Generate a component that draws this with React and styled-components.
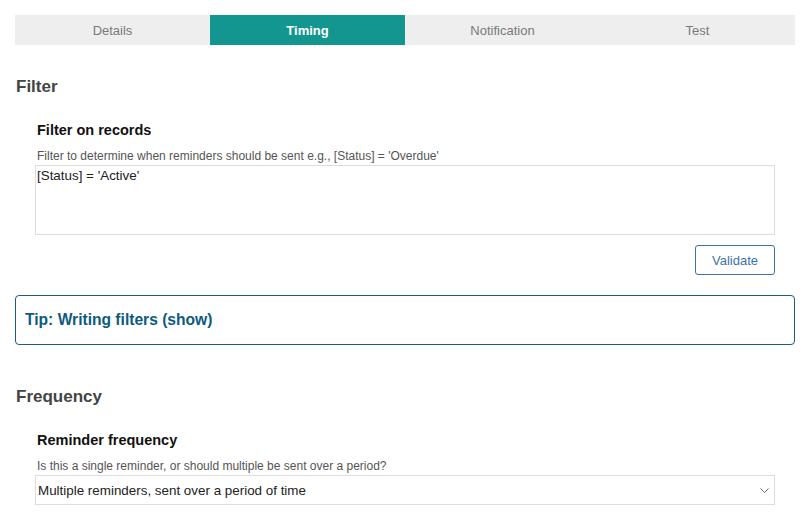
import React, { useState } from 'react';
import styled, { createGlobalStyle } from 'styled-components';

const GlobalStyle = createGlobalStyle`
  body {
    margin: 0;
    background: #fff;
    font-family: 'Liberation Sans', Arial, sans-serif;
  }
`;

const Page = styled.div`
  padding: 15px 14px 0 15px;
`;

const TabBar = styled.div`
  display: grid;
  grid-template-columns: repeat(4, 1fr);
  background: #eeeeee;
  height: 30px;
`;

const Tab = styled.button`
  border: none;
  margin: 0;
  padding: 0;
  font-family: inherit;
  font-size: 13px;
  cursor: pointer;
  background: ${p => (p.active ? '#13968f' : 'transparent')};
  color: ${p => (p.active ? '#fff' : '#7a7a7a')};
  font-weight: ${p => (p.active ? 'bold' : 'normal')};
`;

const SectionTitle = styled.h2`
  margin: ${p => p.top}px 0 0;
  padding-left: 1px;
  font-size: 17px;
  line-height: 20px;
  font-weight: bold;
  color: #444;
`;

const Field = styled.div`
  padding: 0 20px;
  margin-top: ${p => p.top}px;
`;

const Label = styled.div`
  padding-left: 2px;
  font-size: 14.5px;
  font-weight: bold;
  color: #111;
  line-height: 18px;
`;

const Hint = styled.div`
  margin-top: 10px;
  padding-left: 2px;
  font-size: 12px;
  color: #555;
  line-height: 14px;
`;

const TextArea = styled.textarea`
  display: block;
  box-sizing: border-box;
  width: 100%;
  height: 70px;
  margin-top: 2px;
  padding: 2px 1px;
  border: 1px solid #ddd;
  font-family: inherit;
  font-size: 13.4px;
  color: #222;
  resize: none;
  outline: none;
`;

const Actions = styled.div`
  display: flex;
  justify-content: flex-end;
  margin-top: 10px;
`;

const OutlineButton = styled.button`
  height: 30px;
  width: 80px;
  background: #fff;
  border: 1px solid #3a73a8;
  border-radius: 3px;
  color: #3a73a8;
  font-family: inherit;
  font-size: 13px;
  cursor: pointer;
`;

const TipBox = styled.div`
  margin-top: 20px;
  border: 1px solid #1b5c7c;
  border-radius: 4px;
  height: 50px;
  box-sizing: border-box;
  display: flex;
  align-items: center;
  padding: 0 9px;
`;

const TipText = styled.span`
  font-size: 15.6px;
  font-weight: bold;
  color: #0e5a7d;
  cursor: pointer;
`;

const SelectBox = styled.div`
  margin-top: 2px;
  height: 30px;
  box-sizing: border-box;
  border: 1px solid #ddd;
  display: flex;
  align-items: center;
  justify-content: space-between;
  padding: 0 5px 0 2px;
  font-size: 13.4px;
  color: #222;
`;

export default function App() {
  const [tab, setTab] = useState('Timing');
  const tabs = ['Details', 'Timing', 'Notification', 'Test'];

  return (
    <Page>
      <GlobalStyle />
      <TabBar>
        {tabs.map(t => (
          <Tab key={t} active={t === tab} onClick={() => setTab(t)}>
            {t}
          </Tab>
        ))}
      </TabBar>

      <SectionTitle top={32}>Filter</SectionTitle>
      <Field top={24}>
        <Label>Filter on records</Label>
        <Hint>Filter to determine when reminders should be sent e.g., [Status] = 'Overdue'</Hint>
        <TextArea defaultValue="[Status] = 'Active'" />
        <Actions>
          <OutlineButton>Validate</OutlineButton>
        </Actions>
      </Field>

      <TipBox>
        <TipText>Tip: Writing filters (show)</TipText>
      </TipBox>

      <SectionTitle top={42}>Frequency</SectionTitle>
      <Field top={24}>
        <Label>Reminder frequency</Label>
        <Hint>Is this a single reminder, or should multiple be sent over a period?</Hint>
        <SelectBox>
          <span>Multiple reminders, sent over a period of time</span>
          <svg width="9" height="5" viewBox="0 0 9 5" fill="none" stroke="#666" strokeWidth="1">
            <path d="M0.5 0.5l4 4 4-4" />
          </svg>
        </SelectBox>
      </Field>
    </Page>
  );
}
